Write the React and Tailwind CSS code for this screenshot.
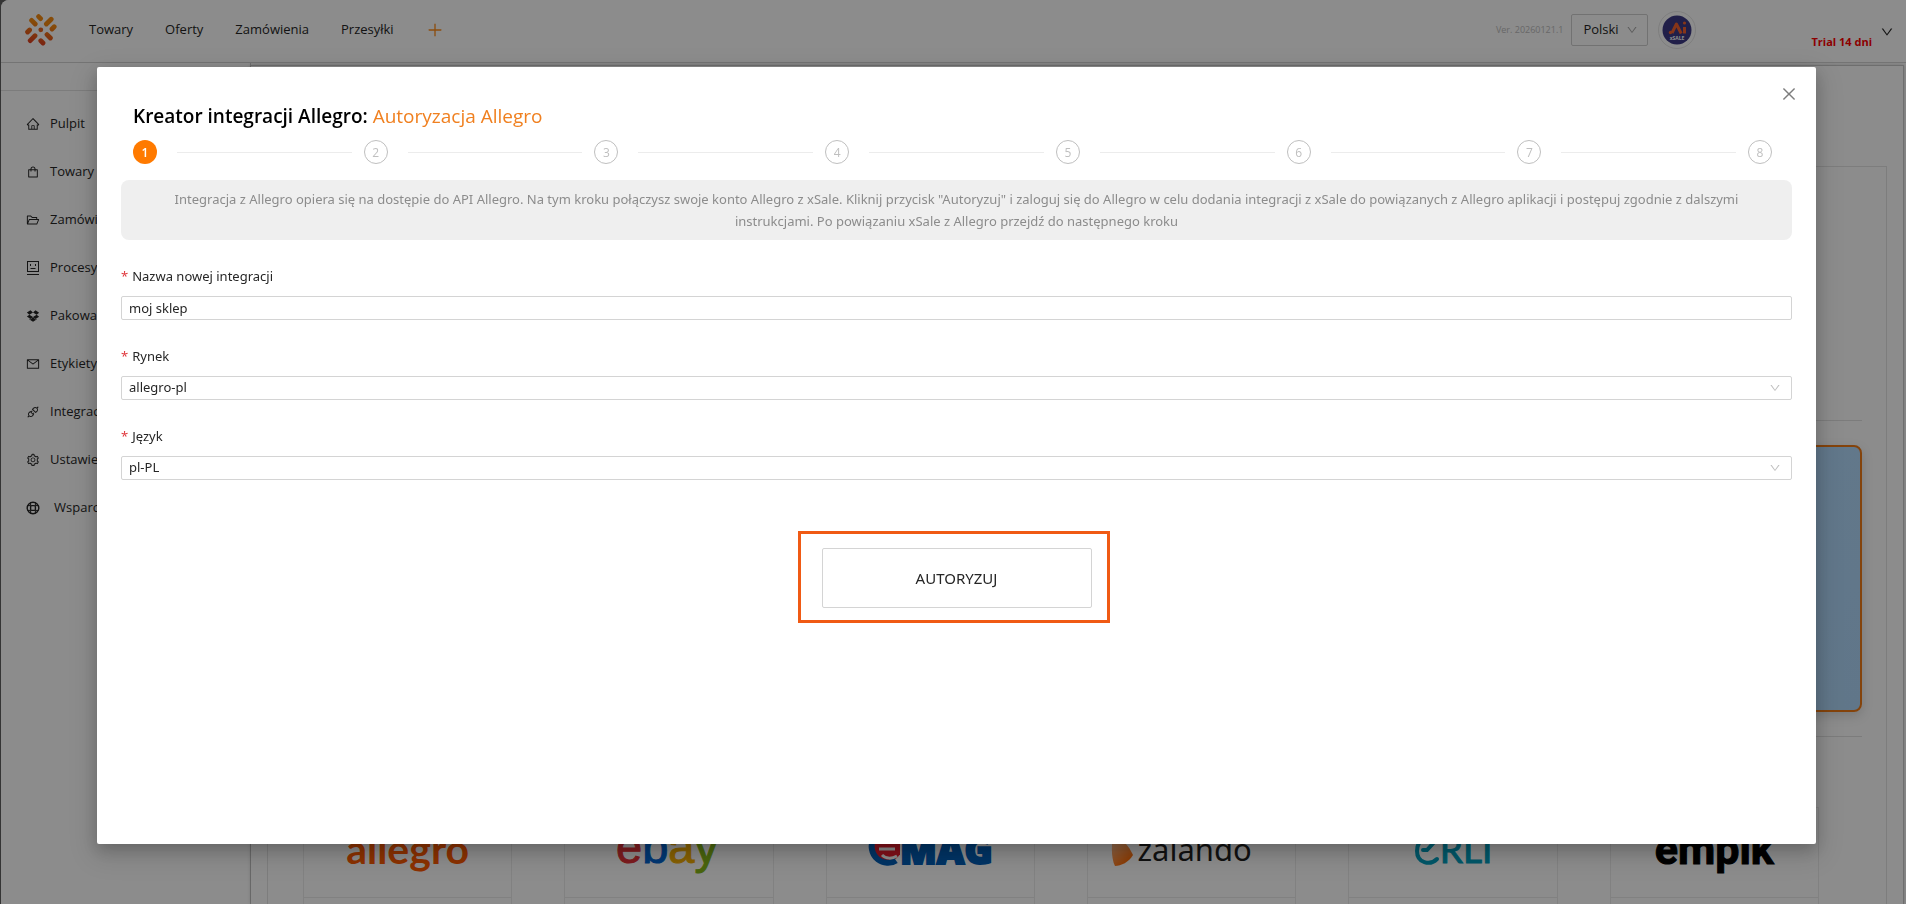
import React, { useState } from "react";
import {
  AiOutlineApi,
  AiOutlineClose,
  AiOutlineDown,
  AiOutlineDropbox,
  AiOutlineFolderOpen,
  AiOutlineHome,
  AiOutlineMail,
  AiOutlinePlus,
  AiOutlineSetting,
  AiOutlineShopping,
} from "react-icons/ai";

const ProcessIcon = () => (
  <svg viewBox="0 0 14 14" className="h-[14px] w-[14px]" fill="none" stroke="currentColor">
    <rect x="1.5" y="0.5" width="11" height="10" />
    <path d="M1 13.5h12M4.5 3v2M9.5 3v2M4.5 7.5h5" />
  </svg>
);

const SupportIcon = () => (
  <svg viewBox="0 0 14 14" className="h-[14px] w-[14px]" fill="none" stroke="currentColor" strokeWidth="1.4">
    <circle cx="7" cy="7" r="5.8" />
    <rect x="4.6" y="4.6" width="4.8" height="4.8" rx="1.2" />
    <path d="M4.6 1.4v3.4M9.4 1.4v3.4M4.6 9.4v3.2M9.4 9.4v3.2M1.4 4.6h3.2M1.4 9.4h3.2M9.4 4.6h3.2M9.4 9.4h3.2" strokeWidth="1" />
  </svg>
);

const Logo = () => (
  <svg viewBox="0 0 32 32" className="h-8 w-8" strokeLinecap="round" strokeWidth="4.8">
    <defs>
      <linearGradient id="logo-fill" gradientUnits="userSpaceOnUse" x1="20" y1="0" x2="12" y2="32">
        <stop offset="0.3" stopColor="#f58a12" />
        <stop offset="1" stopColor="#dc3a22" />
      </linearGradient>
    </defs>
    <g stroke="url(#logo-fill)">
      <path d="M13.6 2.6l2 2M26.2 5.2l-4.8 4.8M29.2 12.8l-2.2 2.2M22 20.6l3.4 3.4M15.8 26.8l2.2 2.2M10 21.8l-4.8 4.8M4.6 16l-2 2M6.6 6.4l3.6 3.6" />
    </g>
    <circle cx="15.8" cy="15.8" r="2.4" fill="#e8641e" />
  </svg>
);

const topLinks = ["Towary", "Oferty", "Zamówienia", "Przesyłki"];

const menuItems = [
  { label: "Pulpit", icon: <AiOutlineHome /> },
  { label: "Towary", icon: <AiOutlineShopping /> },
  { label: "Zamówienia", icon: <AiOutlineFolderOpen /> },
  { label: "Procesy", icon: <ProcessIcon /> },
  { label: "Pakowanie", icon: <AiOutlineDropbox /> },
  { label: "Etykiety", icon: <AiOutlineMail /> },
  { label: "Integracje", icon: <AiOutlineApi /> },
  { label: "Ustawienia", icon: <AiOutlineSetting /> },
  { label: "Wsparcie", icon: <SupportIcon />, wide: true },
];

const steps = [1, 2, 3, 4, 5, 6, 7, 8];

const Header = () => (
  <header className="flex h-[63px] shrink-0 items-center border-b border-[#d4d4d4] bg-white pr-3 pb-[2px] pl-6">
    <a href="#" aria-label="xSale">
      <Logo />
    </a>
    <nav className="ml-8 flex items-center gap-8 text-[13px]">
      {topLinks.map((link) => (
        <a key={link} href="#">{link}</a>
      ))}
      <button type="button" aria-label="Dodaj" className="text-[#ff8c1a]">
        <AiOutlinePlus size={18} />
      </button>
    </nav>
    <div className="ml-auto flex items-center">
      <span className="mr-2 text-[9px] text-[#bdbdbd]">Ver. 20260121.1</span>
      <div className="relative mr-[10px]">
        <select
          aria-label="Język interfejsu"
          defaultValue="pl"
          className="h-8 w-[77px] appearance-none rounded-xs border border-[#d0d0d0] bg-white pl-[11px] text-[13px]"
        >
          <option value="pl">Polski</option>
          <option value="en">English</option>
        </select>
        <AiOutlineDown size={12} className="pointer-events-none absolute top-[10px] right-[10px] text-[#a8a8a8]" />
      </div>
      <button type="button" aria-label="Asystent AI" className="rounded-full border border-[#e6e6e6] p-[3px]">
        <svg viewBox="0 0 30 30" className="h-[30px] w-[30px]">
          <circle cx="15" cy="15" r="14.5" fill="#3c3a85" />
          <path d="M10 18l4.4-9 4.8 9.5" fill="none" stroke="#f4622e" strokeWidth="3" strokeLinejoin="round" />
          <path d="M22.5 12v6.5" stroke="#f4622e" strokeWidth="3" />
          <circle cx="22.5" cy="8" r="1.6" fill="#f4622e" />
          <circle cx="8.5" cy="17.5" r="1.7" fill="#f4622e" />
          <text x="15" y="25" textAnchor="middle" fontSize="5" fontWeight="700" fill="#fff">xSALE</text>
        </svg>
      </button>
      <span className="mt-6 ml-[115px] text-[11px] font-bold text-[#ff0000]">Trial 14 dni</span>
      <AiOutlineDown size={14} className="mt-1 ml-2" />
    </div>
  </header>
);

const Sidebar = () => (
  <aside className="w-[250px] shrink-0 border-r border-[#cfcfcf] bg-white">
    <div className="h-7 border-b border-[#e2e2e2]" />
    <ul className="pt-[9px] text-[13px]">
      {menuItems.map((item) => (
        <li key={item.label}>
          <a href="#" className="flex h-12 items-center pl-[25px]">
            <span className="text-[14px]">{item.icon}</span>
            <span className={item.wide ? "ml-[14px]" : "ml-[10px]"}>{item.label}</span>
          </a>
        </li>
      ))}
    </ul>
  </aside>
);

const MarketCard = ({ children }) => (
  <a href="#" className="block h-[200px] border border-[#ececec]">
    <div className="flex h-[90px] items-center justify-center border-b border-[#ececec] pb-2 whitespace-nowrap">
      {children}
    </div>
  </a>
);

const Marketplaces = () => (
  <div className="grid grid-cols-6 gap-[52px] pr-[43px] pl-[11px]">
    <MarketCard>
      <span className="font-['Lato',sans-serif] text-[41px] leading-10 font-bold text-[#ff5a00]">allegro</span>
    </MarketCard>
    <MarketCard>
      <span className="mr-1 mb-1 font-['Liberation_Sans',sans-serif] text-[47px] leading-10 [-webkit-text-stroke:1px_currentColor]">
        <span className="text-[#e53238]">e</span>
        <span className="text-[#0064d2]">b</span>
        <span className="text-[#f5af02]">a</span>
        <span className="text-[#86b817]">y</span>
      </span>
    </MarketCard>
    <MarketCard>
      <span className="flex items-center font-['Open_Sans',sans-serif] text-[38px] leading-10 font-extrabold text-[#005eb8] [-webkit-text-stroke:2px_currentColor]">
        <svg viewBox="0 0 32 40" className="h-10 w-8" fill="none">
          <circle cx="20" cy="18" r="14" fill="#ed1c2e" />
          <path d="M28 31.5c-5 3.5-13 3-18-1C3 25 2 15 6 9" stroke="#005eb8" strokeWidth="6" />
          <path d="M11 20h16M14 26c4 4 10 4 15 1" stroke="#fff" strokeWidth="3" />
        </svg>
        MAG
      </span>
    </MarketCard>
    <MarketCard>
      <span className="mr-5 flex items-center">
        <svg viewBox="0 0 22 36" className="mr-1 h-9 w-[22px]">
          <defs>
            <linearGradient id="zalando-fill" x1="0" y1="0" x2="0.6" y2="1">
              <stop offset="0.3" stopColor="#ffb27a" />
              <stop offset="1" stopColor="#ff6900" />
            </linearGradient>
          </defs>
          <path d="M3 4C0 10 0 28 4 35c6 0 14-4 18-11C18 15 10 6 3 4z" fill="url(#zalando-fill)" />
        </svg>
        <span className="font-['Noto_Sans',sans-serif] text-[31px] leading-10 text-[#1f1f1f]">zalando</span>
      </span>
    </MarketCard>
    <MarketCard>
      <span className="flex items-center font-['Lato',sans-serif] text-[37px] leading-10 text-[#00a0c0] [-webkit-text-stroke:1px_currentColor]">
        <svg viewBox="0 0 26 40" className="h-10 w-[26px]" fill="none" stroke="currentColor" strokeWidth="4" strokeLinecap="round">
          <path d="M9 21h4L23 10C17 4 3 9 3 22c0 12 13 15 20 8" />
        </svg>
        RLI
      </span>
    </MarketCard>
    <MarketCard>
      <span className="font-['Roboto',sans-serif] text-[43px] leading-10 font-bold text-black [-webkit-text-stroke:1px_currentColor]">
        empik
      </span>
    </MarketCard>
  </div>
);

const StepBar = () => (
  <ol className="mt-[11px] mr-5 ml-3 flex">
    {steps.map((step) => (
      <li key={step} className="flex items-center not-last:flex-1">
        <span
          className={
            step === 1
              ? "flex h-6 w-6 items-center justify-center rounded-full bg-[#ff7a00] pt-[2px] text-xs font-semibold text-white"
              : "flex h-6 w-6 items-center justify-center rounded-full border border-[#bfbfbf] pt-[2px] text-xs text-[#bfbfbf]"
          }
        >
          {step}
        </span>
        {step < steps.length && <span className="mr-3 ml-5 h-px flex-1 bg-[#ececec]" />}
      </li>
    ))}
  </ol>
);

const FieldLabel = ({ id, children }) => (
  <label htmlFor={id} className="flex h-10 gap-1 pt-2 text-[13px] leading-6">
    <span className="text-[#e0393e]">*</span>
    {children}
  </label>
);

const SelectField = ({ id, label, options }) => (
  <div>
    <FieldLabel id={id}>{label}</FieldLabel>
    <div className="relative">
      <select
        id={id}
        className="block h-6 w-full appearance-none rounded-xs border border-[#d4d4d4] bg-white px-[7px] text-[13px]"
      >
        {options.map((option) => (
          <option key={option}>{option}</option>
        ))}
      </select>
      <AiOutlineDown size={12} className="pointer-events-none absolute top-[6px] right-[11px] text-[#bfbfbf]" />
    </div>
  </div>
);

const IntegrationWizard = () => {
  const [name, setName] = useState("moj sklep");

  return (
    <div
      role="dialog"
      aria-labelledby="wizard-title"
      className="relative rounded-xs bg-white px-6 pt-9 pb-[236px] shadow-[0_6px_16px_rgba(0,0,0,0.2),0_9px_28px_8px_rgba(0,0,0,0.1)]"
    >
      <button type="button" aria-label="Zamknij" className="absolute top-[18px] right-[18px] text-[#7d7d7d]">
        <AiOutlineClose size={18} />
      </button>

      <h2 id="wizard-title" className="ml-3 text-[19px] leading-[26px] font-semibold text-black">
        Kreator integracji Allegro: <span className="font-normal text-[#f08020]">Autoryzacja Allegro</span>
      </h2>

      <StepBar />

      <p className="mt-4 rounded-lg bg-[#efefef] px-6 py-2 text-center font-['Noto_Sans',sans-serif] text-[13px] leading-[22px] text-[#8c8c8c]">
        Integracja z Allegro opiera się na dostępie do API Allegro. Na tym kroku połączysz swoje konto Allegro z xSale.
        Kliknij przycisk "Autoryzuj" i zaloguj się do Allegro w celu dodania integracji z xSale do powiązanych z Allegro
        aplikacji i postępuj zgodnie z dalszymi instrukcjami. Po powiązaniu xSale z Allegro przejdź do następnego kroku
      </p>

      <form className="mt-4 flex flex-col gap-4 font-['Noto_Sans',sans-serif]">
        <div>
          <FieldLabel id="name">Nazwa nowej integracji</FieldLabel>
          <input
            id="name"
            type="text"
            value={name}
            onChange={(e) => setName(e.target.value)}
            className="block h-6 w-full rounded-xs border border-[#d4d4d4] px-[7px] text-[13px]"
          />
        </div>
        <SelectField id="market" label="Rynek" options={["allegro-pl", "allegro-cz", "allegro-sk"]} />
        <SelectField id="language" label="Język" options={["pl-PL", "en-US"]} />

        <div className="relative mx-auto mt-[52px]">
          <button type="button" className="h-[60px] w-[270px] rounded-xs border border-[#d4d4d4] text-[15px]">
            AUTORYZUJ
          </button>
          <span className="pointer-events-none absolute -top-[17px] -right-[18px] -bottom-[15px] -left-6 border-3 border-[#f05a14]" />
        </div>
      </form>
    </div>
  );
};

const App = () => {
  return (
    <div className="h-screen overflow-hidden bg-[#606060] pl-px font-['Open_Sans','Noto_Sans',sans-serif] text-[#262626]">
      <div className="flex h-full flex-col overflow-hidden rounded-tl-lg bg-white">
        <Header />
        <div className="flex flex-1 overflow-hidden">
          <Sidebar />
          <main className="mt-[2px] mr-[2px] flex-1 border-t border-r border-[#c8c8c8] shadow-[0_0_4px_rgba(0,0,0,0.2)]">
            <section className="mx-4 mt-[100px] border border-[#e4e4e4] px-6">
              <div className="mt-[253px] border-t border-[#e2e2e2] py-6">
                <div className="h-[267px] rounded-lg border-2 border-[#f07a14] bg-linear-to-br from-[#b4dcff] to-[#b0d8fa] shadow-[0_4px_12px_rgba(0,0,0,0.15)]" />
              </div>
              <div className="border-t border-[#e2e2e2] pt-[70px]">
                <Marketplaces />
              </div>
            </section>
          </main>
        </div>
      </div>

      <div className="fixed inset-0 overflow-auto bg-black/45 pt-[67px] pr-[90px] pl-[97px]">
        <IntegrationWizard />
      </div>
    </div>
  );
};

export default App;
